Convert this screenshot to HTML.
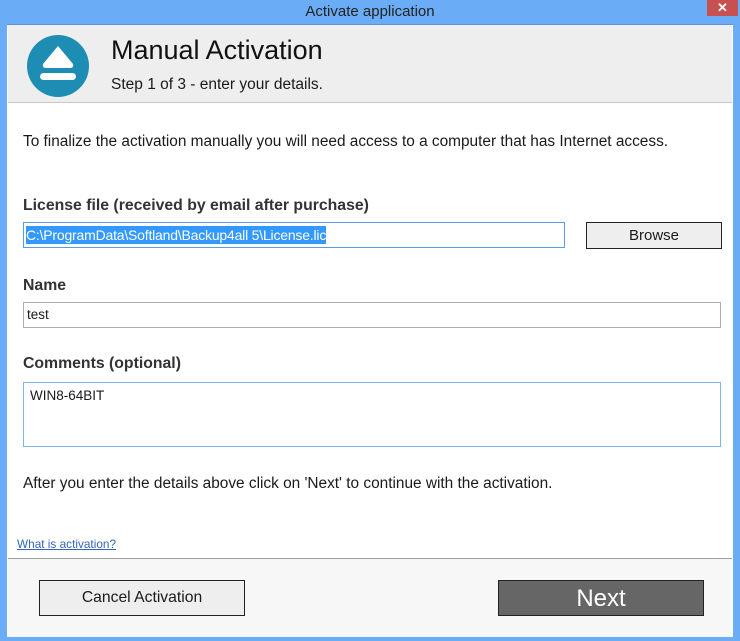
<!DOCTYPE html>
<html><head><style>
*{margin:0;padding:0;box-sizing:border-box}
body{width:740px;height:641px;background:#6aadf6;position:relative;overflow:hidden;font-family:"Liberation Sans",sans-serif;color:#1a1a1a}
.abs{position:absolute}
.t{font-size:14px;white-space:nowrap}
</style></head><body>
<div class="abs t" style="left:0;width:740px;top:3px;text-align:center;color:#222;font-size:15px">Activate application</div>
<div class="abs" style="left:707px;top:0;width:31px;height:16px;background:#c75050;color:#fff;font-size:13px;font-weight:bold;text-align:center;line-height:15px">✕</div>
<div class="abs" style="left:7px;top:24px;width:726px;height:613px;background:#fff;border-top:1px solid #5d93d4"></div>
<div class="abs" style="left:8px;top:25px;width:724px;height:78px;background:#eeeeee;border-bottom:1px solid #c8c8c8"></div>
<svg class="abs" style="left:26px;top:34px" width="64" height="64" viewBox="0 0 64 64"><circle cx="32" cy="32" r="31" fill="#1e8db3"/><path d="M32 12 L47 30 Q48 34 44 34 L20 34 Q16 34 17 30 Z" fill="#fff"/><rect x="14" y="39" width="36" height="7" rx="3.5" fill="#fff"/></svg>
<div class="abs" style="left:111px;top:35px;font-size:27px;white-space:nowrap;color:#111">Manual Activation</div>
<div class="abs t" style="left:111px;top:76px;font-size:15.5px">Step 1 of 3 - enter your details.</div>
<div class="abs t" style="left:23px;top:133px;font-size:15.4px">To finalize the activation manually you will need access to a computer that has Internet access.</div>
<div class="abs t" style="left:23px;top:197px;font-weight:bold;color:#333;font-size:15.8px">License file (received by email after purchase)</div>
<div class="abs" style="left:23px;top:222px;width:542px;height:26px;border:1px solid #569de5;background:#fff"></div>
<div class="abs t" style="left:26px;top:226px;height:18px;background:#3399ff;color:#fff;font-size:14px;line-height:18px;letter-spacing:-0.2px">C:\ProgramData\Softland\Backup4all 5\License.lic</div>
<div class="abs" style="left:586px;top:222px;width:136px;height:27px;border:1px solid #222;background:#eeeeee;text-align:center;line-height:25px;font-size:15px">Browse</div>
<div class="abs t" style="left:23px;top:277px;font-weight:bold;color:#333;font-size:15.8px">Name</div>
<div class="abs" style="left:23px;top:302px;width:698px;height:26px;border:1px solid #acacac;background:#fff;font-size:13.5px;padding-left:3px;line-height:24px">test</div>
<div class="abs t" style="left:23px;top:355px;font-weight:bold;color:#333;font-size:15.8px">Comments (optional)</div>
<div class="abs" style="left:23px;top:382px;width:698px;height:65px;border:1px solid #7eb4ea;background:#fff;font-size:13.5px;padding:5px 6px">WIN8-64BIT</div>
<div class="abs t" style="left:23px;top:475px;font-size:15.4px">After you enter the details above click on 'Next' to continue with the activation.</div>
<div class="abs" style="left:17px;top:537px;font-size:11.8px;color:#3366bb;text-decoration:underline;white-space:nowrap">What is activation?</div>
<div class="abs" style="left:8px;top:558px;width:724px;height:79px;background:#f7f7f7;border-top:1px solid #a0a0a0"></div>
<div class="abs" style="left:39px;top:580px;width:206px;height:36px;border:1px solid #222;background:#eeeeee;text-align:center;line-height:34px;font-size:15.7px">Cancel Activation</div>
<div class="abs" style="left:498px;top:580px;width:206px;height:36px;border:1px solid #222;background:#666;color:#fff;text-align:center;line-height:36px;font-size:24px">Next</div>
</body></html>
